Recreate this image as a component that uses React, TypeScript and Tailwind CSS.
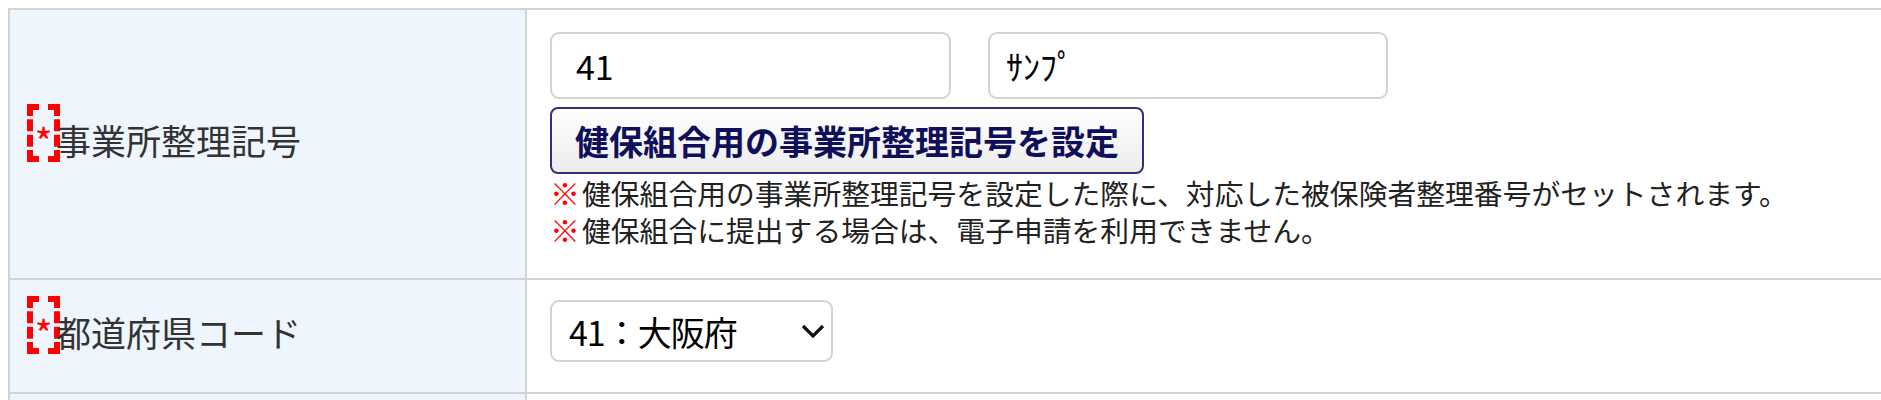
export default function App() {
  return (
    <div className="w-[1881px] h-[400px] overflow-hidden bg-white pt-[8px] pl-[8px] font-['Noto_Sans_CJK_JP','Noto_Sans',sans-serif]">
      <div className="w-[1900px] border-t-2 border-l-2 border-[#d3d3d3]">
        {/* 事業所整理記号 */}
        <div className="grid grid-cols-[517px_1fr]">
          <div className="h-[270px] bg-[#eef5fd] border-r-2 border-b-2 border-[#d3d3d3] flex items-center pl-[17px] pb-[10px]">
            <RequiredMark />
            <span className="text-[35px] leading-[1.4] text-[#333]">事業所整理記号</span>
          </div>
          <div className="h-[270px] border-b-2 border-[#d3d3d3] pl-[23px] pt-[22px] flex flex-col items-start">
            <div className="flex gap-[37px]">
              <div className="w-[401px] h-[67px] border-2 border-[#d3d3d3] rounded-[9px] flex items-center px-[24px] text-[34px] text-black">
                41
              </div>
              <div className="w-[400px] h-[67px] border-2 border-[#d3d3d3] rounded-[9px] flex items-center px-[16px] text-[34px] text-black">
                ｻﾝﾌﾟ
              </div>
            </div>
            <button className="mt-[8px] h-[67px] px-[23px] border-2 border-[#30307c] rounded-[8px] bg-gradient-to-b from-white to-[#ececec] text-[34px] font-bold leading-none text-[#10105a]">
              健保組合用の事業所整理記号を設定
            </button>
            <div className="text-[28.8px] leading-[37px] text-[#222]">
              <p className="flex">
                <Kome />
                健保組合用の事業所整理記号を設定した際に、対応した被保険者整理番号がセットされます。
              </p>
              <p className="flex">
                <Kome />
                健保組合に提出する場合は、電子申請を利用できません。
              </p>
            </div>
          </div>
        </div>

        {/* 都道府県コード */}
        <div className="grid grid-cols-[517px_1fr]">
          <div className="h-[114px] bg-[#eef5fd] border-r-2 border-b-2 border-[#d3d3d3] flex items-center pl-[17px] pb-[10px]">
            <RequiredMark />
            <span className="text-[35px] leading-[1.4] text-[#333]">都道府県コード</span>
          </div>
          <div className="h-[114px] border-b-2 border-[#d3d3d3] pl-[23px] pt-[20px]">
            <div className="w-[283px] h-[62px] border-2 border-[#d3d3d3] rounded-[9px] flex items-center justify-between pl-[17px] pr-[6px] text-[34px] tracking-[-1px] text-black">
              <span>41：大阪府</span>
              <svg width="24" height="14" viewBox="0 0 24 14" fill="none">
                <path d="M2 2 L12 12 L22 2" stroke="#111" strokeWidth="3.2" />
              </svg>
            </div>
          </div>
        </div>

        {/* next row (cut off) */}
        <div className="grid grid-cols-[517px_1fr]">
          <div className="h-[100px] bg-[#eef5fd] border-r-2 border-[#d3d3d3]" />
          <div className="h-[100px]" />
        </div>
      </div>
    </div>
  );
}

function RequiredMark() {
  return (
    <span className="w-[33px] h-[58px] mb-[13px] -mr-[4px] shrink-0 border-[6px] border-dashed border-[#ff0000] flex items-center justify-center">
      <span className="text-[38px] leading-none text-[#ff0000] pt-[16px]">*</span>
    </span>
  );
}

function Kome() {
  return (
    <span className="w-[32px] shrink-0 text-[30px] leading-[37px] font-bold text-[#ff0000]">※</span>
  );
}
